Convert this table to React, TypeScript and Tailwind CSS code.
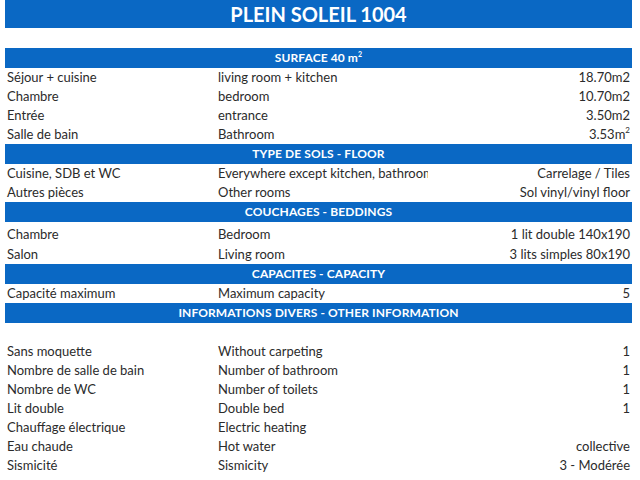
import React from "react";

type Row = { fr: string; en: string; v: React.ReactNode; h?: string };

const font = { fontFamily: "Lato, 'Open Sans', 'Liberation Sans', sans-serif" };

function Header({ children }: { children: React.ReactNode }) {
  return (
    <div className="h-[20px] bg-[#0a68c4] text-white font-bold text-[12px] flex items-center justify-center leading-none tracking-[0.1px]">
      {children}
    </div>
  );
}

function DataRow({ r }: { r: Row }) {
  return (
    <div className={`grid grid-cols-[211px_212px_1fr] ${r.h ?? "h-[19px]"} items-end text-[13px] leading-[16px] text-[#2b2b2b] pb-[2px]`}>
      <div className="pl-[2px] whitespace-nowrap overflow-hidden">{r.fr}</div>
      <div className="pl-[2px] whitespace-nowrap overflow-hidden">{r.en}</div>
      <div className="pr-[2px] text-right whitespace-nowrap">{r.v}</div>
    </div>
  );
}

const surface: Row[] = [
  { fr: "Séjour + cuisine", en: "living room + kitchen", v: "18.70m2" },
  { fr: "Chambre", en: "bedroom", v: "10.70m2" },
  { fr: "Entrée", en: "entrance", v: "3.50m2" },
  {
    fr: "Salle de bain",
    en: "Bathroom",
    v: (
      <span>
        3.53m<sup className="text-[8px] relative -top-[6px]">2</sup>
      </span>
    ),
  },
];

const sols: Row[] = [
  { fr: "Cuisine, SDB et WC", en: "Everywhere except kitchen, bathroom", v: "Carrelage / Tiles" },
  { fr: "Autres pièces", en: "Other rooms", v: "Sol vinyl/vinyl floor" },
];

const couch: Row[] = [
  { fr: "Chambre", en: "Bedroom", v: "1 lit double 140x190", h: "h-[22px]" },
  { fr: "Salon", en: "Living room", v: "3 lits simples 80x190", h: "h-[20px]" },
];

const cap: Row[] = [{ fr: "Capacité maximum", en: "Maximum capacity", v: "5" }];

const info: Row[] = [
  { fr: "Sans moquette", en: "Without carpeting", v: "1" },
  { fr: "Nombre de salle de bain", en: "Number of bathroom", v: "1" },
  { fr: "Nombre de WC", en: "Number of toilets", v: "1" },
  { fr: "Lit double", en: "Double bed", v: "1" },
  { fr: "Chauffage électrique", en: "Electric heating", v: "" },
  { fr: "Eau chaude", en: "Hot water", v: "collective" },
  { fr: "Sismicité", en: "Sismicity", v: "3 - Modérée" },
];

export default function App() {
  return (
    <div className="w-[640px] h-[480px] bg-white overflow-hidden" style={font}>
      <div className="ml-[5px] w-[627px]">
        <div className="h-[28px] bg-[#0a68c4] text-white font-bold text-[20px] flex items-center justify-center leading-none">
          PLEIN SOLEIL 1004
        </div>
        <div className="h-[20px]" />
        <Header>
          <span>
            SURFACE 40 m<sup className="text-[7px] relative -top-[5px]">2</sup>
          </span>
        </Header>
        {surface.map((r, i) => (
          <DataRow key={i} r={r} />
        ))}
        <Header>TYPE DE SOLS - FLOOR</Header>
        {sols.map((r, i) => (
          <DataRow key={i} r={r} />
        ))}
        <Header>COUCHAGES - BEDDINGS</Header>
        {couch.map((r, i) => (
          <DataRow key={i} r={r} />
        ))}
        <Header>CAPACITES - CAPACITY</Header>
        {cap.map((r, i) => (
          <DataRow key={i} r={r} />
        ))}
        <Header>INFORMATIONS DIVERS - OTHER INFORMATION</Header>
        <div className="h-[19px]" />
        {info.map((r, i) => (
          <DataRow key={i} r={r} />
        ))}
      </div>
    </div>
  );
}
